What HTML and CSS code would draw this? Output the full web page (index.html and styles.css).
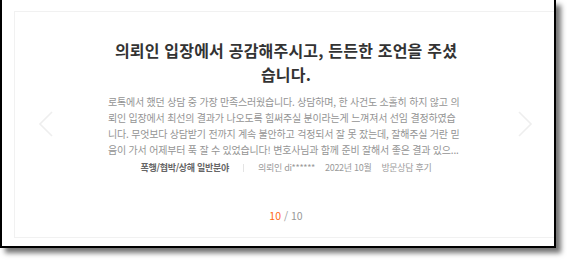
FILE: index.html
```html
<!DOCTYPE html>
<html lang="ko">
<head>
    <meta charset="UTF-8">
    <meta name="viewport" content="width=device-width, initial-scale=1.0">
    <title>상담 후기</title>
    <link rel="stylesheet" href="styles.css">
</head>
<body>
    <div class="frame">
        <div class="review-card">
            <button class="nav-btn prev" aria-label="이전">
                <svg width="16" height="26" viewBox="0 0 16 26"><path d="M14 1 L2 13 L14 25" fill="none" stroke="#eeeeee" stroke-width="1.6"/></svg>
            </button>
            <button class="nav-btn next" aria-label="다음">
                <svg width="16" height="26" viewBox="0 0 16 26"><path d="M2 1 L14 13 L2 25" fill="none" stroke="#eeeeee" stroke-width="1.6"/></svg>
            </button>

            <div class="review-body">
                <h2 class="review-title">의뢰인 입장에서 공감해주시고, 든든한 조언을 주셨습니다.</h2>
                <p class="review-text">로톡에서 했던 상담 중 가장 만족스러웠습니다. 상담하며, 한 사건도 소홀히 하지 않고 의뢰인 입장에서 최선의 결과가 나오도록 힘써주실 분이라는게 느껴져서 선임 결정하였습니다. 무엇보다 상담받기 전까지 계속 불안하고 걱정되서 잘 못 잤는데, 잘해주실 거란 믿음이 가서 어제부터 푹 잘 수 있었습니다! 변호사님과 함께 준비 잘해서 좋은 결과 있으...</p>
                <div class="review-meta">
                    <span class="category">폭행/협박/상해 일반분야</span>
                    <span class="divider"></span>
                    <span>의뢰인 di******</span>
                    <span>2022년 10월</span>
                    <span>방문상담 후기</span>
                </div>
            </div>

            <div class="pager"><span class="current">10</span> / 10</div>
        </div>
    </div>
</body>
</html>
```

FILE: styles.css
```css
body {
    margin: 0;
    width: 567px;
    height: 262px;
    overflow: hidden;
    background: #fff;
    font-family: "Noto Sans CJK KR", "Noto Sans", sans-serif;
}

.frame {
    width: 552px;
    height: 246px;
    border: 2px solid #000;
    border-top: 0;
    background: #fff;
    overflow: hidden;
    box-shadow: 5px 5px 5px rgba(0, 0, 0, 0.55);
}

.review-card {
    position: relative;
    margin: 11px 0 0 12px;
    width: 542px;
    height: 225px;
    border: 1px solid #f1f1f1;
    text-align: center;
}

.nav-btn {
    position: absolute;
    top: 99px;
    padding: 0;
    border: 0;
    background: none;
    line-height: 0;
}

.nav-btn.prev {
    left: 23px;
}

.nav-btn.next {
    left: 502px;
}

.review-body {
    width: 356px;
    margin: 0 auto;
    padding-top: 26px;
}

.review-title {
    margin: 0;
    font-size: 16px;
    line-height: 24px;
    font-weight: 700;
    color: #333;
    letter-spacing: 0.2px;
}

.review-text {
    margin: 8px 0 0;
    font-size: 10px;
    line-height: 16px;
    color: #949494;
    text-align: left;
    word-break: break-all;
    letter-spacing: -0.2px;
}

.review-meta {
    display: flex;
    justify-content: center;
    align-items: center;
    gap: 10px;
    margin-top: 4px;
    font-size: 9px;
    line-height: 12px;
    color: #9a9a9a;
    letter-spacing: -0.3px;
}

.review-meta .category {
    font-weight: 700;
    color: #666;
}

.review-meta .divider {
    width: 1px;
    height: 8px;
    margin: 0 4px;
    background: #e4e4e4;
}

.pager {
    margin-top: 34px;
    font-size: 10.5px;
    line-height: 16px;
    color: #999;
}

.pager .current {
    color: #ff6a13;
}
```
